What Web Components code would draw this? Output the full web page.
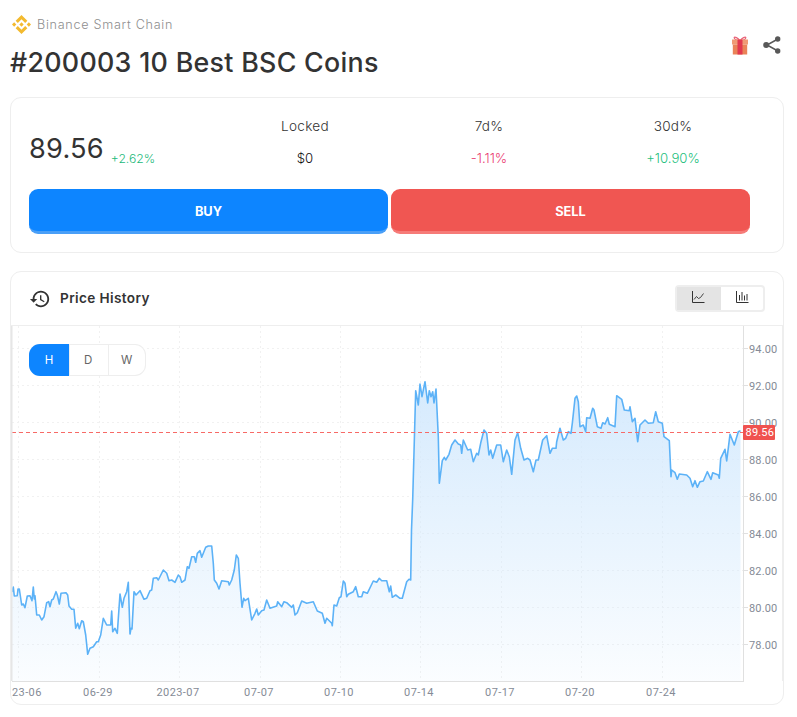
<!DOCTYPE html>
<html lang="en">
<head>
<meta charset="utf-8">
<title>10 Best BSC Coins</title>
<style>
    html, body { margin: 0; background: #fff; }
    body { font-family: Inter, "Liberation Sans", sans-serif; color: #333; }
</style>
</head>
<body>
<coin-page>
    <coin-head chain="Binance Smart Chain" title="#200003 10 Best BSC Coins"></coin-head>
    <stats-card></stats-card>
    <price-history></price-history>
</coin-page>

<script>
class CoinPage extends HTMLElement {
    constructor() {
        super();
        this.attachShadow({ mode: 'open' });
        this.shadowRoot.innerHTML = `
            <style>
                :host {
                    display: flex;
                    flex-direction: column;
                    width: 774px;
                    padding: 15px 13px 12px 10px;
                    gap: 18px;
                }
            </style>
            <slot></slot>
        `;
    }
}

class CoinHead extends HTMLElement {
    constructor() {
        super();
        this.attachShadow({ mode: 'open' });
        this.shadowRoot.innerHTML = `
            <style>
                :host {
                    display: flex;
                    justify-content: space-between;
                    height: 67px;
                    margin-bottom: -3px;
                }
                .chain {
                    display: flex;
                    align-items: center;
                    gap: 6px;
                    height: 19px;
                    padding-left: 2px;
                    font-size: 12.6px;
                    font-weight: 300;
                    letter-spacing: .72px;
                    color: #8e8e8e;
                }
                h1 {
                    margin: 9px 0 0 0;
                    font-size: 26.8px;
                    line-height: 38px;
                    font-weight: 500;
                    letter-spacing: .3px;
                    color: #333;
                }
                .actions {
                    display: flex;
                    gap: 14px;
                    padding: 21px 3px 0 0;
                }
            </style>
            <div>
                <div class="chain">
                    <svg width="19" height="19" viewBox="0 0 126.61 126.61" fill="#f3ba2f">
                        <path d="M38.73 53.2l24.59-24.58 24.6 24.6 14.3-14.31L63.32 0l-38.9 38.9z"/>
                        <path d="M0 63.31l14.3-14.31 14.31 14.31-14.31 14.3z"/>
                        <path d="M38.73 73.41l24.59 24.59 24.6-24.6 14.31 14.29-38.9 38.91-38.91-38.88z"/>
                        <path d="M98 63.31l14.3-14.31 14.31 14.3-14.31 14.32z"/>
                        <path d="M77.83 63.3L63.32 48.78 52.59 59.51l-1.24 1.23-2.54 2.54 14.51 14.5 14.51-14.47z"/>
                    </svg>
                    <span>${this.getAttribute('chain')}</span>
                </div>
                <h1>${this.getAttribute('title')}</h1>
            </div>
            <div class="actions">
                <svg width="18" height="19" viewBox="0 0 18 19">
                    <path d="M9 5C7 1.500 3.500 .5 3.200 1.500 2.900 3 6 5 9 5zM9 5c2-3.500 5.500-4.500 5.800-3.500C15.100 3 12 5 9 5z" fill="none" stroke="#e9657a" stroke-width="1.300"/>
                    <rect x="1" y="3.500" width="16" height="5" fill="#f09a74"/>
                    <rect x="1.800" y="8.500" width="14.400" height="10" fill="#ea8358"/>
                    <rect x="6.500" y="3.500" width="5" height="15" fill="#e2394f"/>
                </svg>
                <svg width="18" height="18" viewBox="0 0 18 18" fill="#585858">
                    <path d="M14 3.500 4 9l10 5.500" fill="none" stroke="#585858" stroke-width="1.500"/>
                    <circle cx="14.700" cy="3" r="2.700"/>
                    <circle cx="3.200" cy="9" r="3"/>
                    <circle cx="14.700" cy="15" r="2.700"/>
                </svg>
            </div>
        `;
    }
}

class StatCell extends HTMLElement {
    constructor() {
        super();
        this.attachShadow({ mode: 'open' });
        this.shadowRoot.innerHTML = `
            <style>
                :host {
                    display: flex;
                    flex-direction: column;
                    align-items: center;
                    gap: 14px;
                    font-size: 13.200px;
                    line-height: 18px;
                    font-weight: 300;
                    color: #333;
                }
                .label { font-size: 13.600px; letter-spacing: .25px; }
                .value { color: var(--tone, #111); }
            </style>
            <span class="label">${this.getAttribute('label')}</span>
            <span class="value"><slot></slot></span>
        `;
    }
}

class TradeButton extends HTMLElement {
    constructor() {
        super();
        this.attachShadow({ mode: 'open' });
        this.shadowRoot.innerHTML = `
            <style>
                :host {
                    display: block;
                    width: 359px;
                    box-sizing: border-box;
                    height: 45px;
                    line-height: 45px;
                    text-align: center;
                    border-radius: 9px;
                    font-size: 12.800px;
                    font-weight: 700;
                    color: #fff;
                    background: var(--fill);
                    border-bottom: 3px solid var(--edge);
                }
            </style>
            <slot></slot>
        `;
    }
}

class StatsCard extends HTMLElement {
    constructor() {
        super();
        this.attachShadow({ mode: 'open' });
        this.shadowRoot.innerHTML = `
            <style>
                :host {
                    display: block;
                    box-sizing: border-box;
                    height: 156px;
                    padding: 19px 18px 0;
                    border: 1px solid #eee;
                    border-radius: 11px;
                    background: #fff;
                }
                .stats {
                    display: grid;
                    grid-template-columns: repeat(4, 184px);
                    height: 71px;
                    margin-bottom: 1px;
                }
                .price {
                    display: flex;
                    align-items: flex-end;
                    gap: 7px;
                    padding-top: 12px;
                    height: 40px;
                }
                .price b {
                    line-height: 40px;
                    font-size: 27.200px;
                    font-weight: 400;
                    letter-spacing: .2px;
                    color: #333;
                }
                .price span {
                    line-height: 18px;
                    margin-bottom: 1px;
                    font-size: 12.200px;
                    font-weight: 300;
                    color: #22b979;
                }
                .trade {
                    display: flex;
                    gap: 3px;
                }
                .buy { --fill: #0d85ff; --edge: #4a9ff7; }
                .sell { --fill: #f05652; --edge: #f67b78; }
                .down { --tone: #ea3d73; }
                .up { --tone: #1fbf7f; }
            </style>
            <div class="stats">
                <div class="price"><b>89.56</b><span>+2.62%</span></div>
                <stat-cell label="Locked">$0</stat-cell>
                <stat-cell label="7d%" class="down">-1.11%</stat-cell>
                <stat-cell label="30d%" class="up">+10.90%</stat-cell>
            </div>
            <div class="trade">
                <trade-button class="buy">BUY</trade-button>
                <trade-button class="sell">SELL</trade-button>
            </div>
        `;
    }
}

// line traced by page pixel, x then y
const PRICE_LINE = [
    12,592, 13.3,587, 14.3,596, 17.3,595.7, 18,589, 19.3,589, 21.7,605, 23.3,604, 25,607.7, 27.3,596, 30,595.7, 32,600.7, 33.3,587, 34.3,599, 35,595.7,
    36.7,615, 39.3,615, 41.7,620, 44,616.7, 46.7,602.7, 48.7,601.7, 50,606.7, 51.7,600, 53.3,599, 56,591.7, 57.3,595, 59.3,604, 61,593.3, 66,592.7, 67.7,595,
    69,606, 71.7,609.3, 74,609.3, 75.7,628.3, 77.7,623.3, 79.3,628.7, 81.7,620.7, 83.3,621.7, 85.7,635, 87.7,654.3, 90,648.3, 93.3,646.7, 96.7,641.7, 98.3,641.7,
    100.7,635, 103.3,618.3, 106.7,625, 110.7,625, 111.7,611, 112.7,631.7, 115,628.3, 117.3,633.3, 120,594, 122.3,607.3, 124,598.3, 126.7,591.7, 128.3,582.3,
    130,634, 131,628.3, 132,629, 134,591.7, 136,595, 140,590.7, 144,599.3, 146.7,598.3, 150,590.7, 151.7,590, 153.3,578.3, 156.7,577.7, 158.3,580, 163.3,570,
    166.7,573.3, 169,580.7, 171.7,580, 175,582.3, 178.3,575, 180,576.7, 181.7,582.3, 185,580, 187.3,566.7, 189,568.3, 191.7,556.7, 194.3,556.7, 195.7,562.3,
    197.3,553.3, 200,550.7, 201.7,557.3, 205.7,547.3, 208.3,546, 211.7,546, 213.3,563.3, 214.3,580, 216.7,583.3, 219,589, 221.7,580.7, 228.3,581.7, 229.3,585,
    231.7,580, 234.3,570, 236.3,555, 238.3,558.3, 240,583.3, 242,607.3, 243.7,598.3, 245,600.7, 248.3,598.3, 251.7,620, 255,613.3, 256.7,609, 258.3,615,
    261.7,610.7, 264,610, 266.7,600, 270,608.3, 276.7,606, 277.7,601.7, 281.7,606.7, 284,601.7, 286.7,602.7, 291.7,607.3, 293.3,605, 295,615, 297.3,612.7,
    301.7,601, 306.7,603.3, 313.3,601.7, 317.3,611, 322.3,613.3, 325,623.3, 326.7,618.3, 331.7,623.3, 332.3,625.7, 334,605, 336.7,606, 339.3,597.7, 341,596.7,
    343.3,581, 345,583.3, 346.7,596.7, 348.3,594.3, 353.3,591.7, 355.7,586.7, 358.3,596.7, 361.7,596.7, 363.3,591.7, 367.3,593.3, 373.3,581, 376.7,582.3,
    379.3,578.3, 381.7,580.7, 386.7,580.7, 389.3,591.7, 390.7,586, 392.3,597.3, 395.7,595, 400,598.3, 402.3,598.3, 406.7,581.7, 409,579.3, 410.7,580,
    411.5,530, 412.7,499.3, 415.7,390.7, 418.3,405, 420,384, 422,396.7, 425,381.7, 427.7,403, 429.3,390.7, 431,396.7, 432.7,391.7, 434,403, 436,389, 438.3,436.7,
    439.3,483.3, 442.3,460.7, 444.3,457.3, 445.7,460, 449,454.3, 451.7,445, 455,440, 458.3,444, 460.7,445, 461.7,453.3, 463.3,440, 467.7,450, 470.7,449.3,
    473.3,461.7, 476.7,453.3, 478.3,455, 481,441.7, 484,430, 486.7,433.3, 489,455, 490.7,450, 492.7,458.3, 496.7,445, 500.7,445, 503.3,461.7, 506.7,450,
    509.3,456.7, 511.7,474.3, 515,440, 517.7,432.7, 520.7,448.3, 524,460, 527.7,458.3, 530,460, 533.3,471.7, 536,460, 538.3,460, 542.7,440, 546.7,435.7,
    550,453.3, 552.3,448.3, 556,448.3, 556.7,441.7, 560,428.3, 563.3,440, 565.7,438.3, 568.3,431.7, 571,433.3, 572.3,423.3, 575,398.3, 576.7,396, 578.3,401.7,
    580,426.7, 583.3,425, 585.7,431.7, 586.7,417.7, 590,418.3, 592.7,408.3, 594,410, 597.3,426.7, 601,428.3, 602.7,422.7, 605,424, 607.7,417.7, 609.3,424.3,
    615,426.7, 616.7,395.7, 621.7,399.3, 624.3,410, 629.3,410.7, 630,406.7, 632.3,421.7, 635,418.3, 637.7,441.7, 640,425, 645,420, 648.3,423.3, 653.3,422.7,
    655.7,411.7, 658.3,421.7, 662.3,423.3, 664,436.7, 669.3,440.7, 671,476.7, 671.7,470, 675,472.7, 677.3,479.3, 679.3,474, 686.7,475, 690,478.3, 692.7,486.7,
    695,480.7, 697.3,487.3, 700,481.7, 703.3,481, 707.3,471.7, 711,479.3, 712.7,472.7, 718.3,475, 719.3,478.3, 720.7,458.3, 725,449.3, 726.7,461, 730,434.3,
    734.3,445, 738.3,431.7, 740.5,430.7
];

class PriceChart extends HTMLElement {
    constructor() {
        super();
        this.attachShadow({ mode: 'open' });

        const pts = [];
        for (let i = 0; i < PRICE_LINE.length; i += 2) {
            pts.push(PRICE_LINE[i] + ',' + PRICE_LINE[i + 1]);
        }
        const line = pts.join(' ');
        const area = line + ' 740.5,681 12,681';

        const ticks = [94, 92, 90, 88, 86, 84, 82, 80, 78];
        const dates = ['23-06', '06-29', '2023-07', '07-07', '07-10', '07-14', '07-17', '07-20', '07-24'];

        let grid = '';
        let labels = '';
        ticks.forEach((t, i) => {
            const y = 349 + i * 37;
            grid += `<line x1="12" x2="743" y1="${y - .5}" y2="${y - .5}"/>`;
            labels += `<line x1="743" x2="748" y1="${y - .5}" y2="${y - .5}" stroke="#e0e0e0"/>`;
            labels += `<text class="price" x="749" y="${y + 4}">${t}.00</text>`;
        });
        dates.forEach((d, i) => {
            const x = Math.round(18.3 + i * 80.4) + .5;
            grid += `<line x1="${x}" x2="${x}" y1="326" y2="681"/>`;
            // the first date sits against the left edge of the plot
            labels += i === 0
                ? `<text x="12" y="695.500">${d}</text>`
                : `<text x="${x - 1.5}" y="695.500" text-anchor="middle">${d}</text>`;
        });

        this.shadowRoot.innerHTML = `
            <style>
                :host {
                    display: block;
                    position: relative;
                    height: 378px;
                }
                svg { display: block; }
                .grid line {
                    stroke: #f1f1f1;
                    stroke-dasharray: 2 3;
                }
                .labels text {
                    font-family: Roboto, "Liberation Sans", sans-serif;
                    font-size: 11px;
                    letter-spacing: .4px;
                    fill: #858b96;
                }
                .labels text.price { letter-spacing: .15px; }
                .tag {
                    font-family: Roboto, "Liberation Sans", sans-serif;
                    font-size: 11px;
                    letter-spacing: .2px;
                    fill: #fff;
                }
                .ranges {
                    position: absolute;
                    left: 18px;
                    top: 18px;
                }
            </style>
            <svg width="772" height="378" viewBox="11 326 772 378">
                <defs>
                    <linearGradient id="fade" gradientUnits="userSpaceOnUse" x1="0" x2="0" y1="381" y2="681">
                        <stop offset="0" stop-color="#d3e9fd" stop-opacity=".95"/>
                        <stop offset="1" stop-color="#d3e9fd" stop-opacity=".1"/>
                    </linearGradient>
                </defs>
                <g class="grid">${grid}</g>
                <polygon points="${area}" fill="url(#fade)"/>
                <polyline points="${line}" fill="none" stroke="#5cb2f7" stroke-width="1.600" stroke-linejoin="round"/>
                <line x1="12" x2="743" y1="432.500" y2="432.500" stroke="#f76a66" stroke-dasharray="4 3"/>
                <line x1="11.500" x2="11.500" y1="326" y2="681" stroke="#e6e6e6" stroke-width="2"/>
                <line x1="743.500" x2="743.500" y1="326" y2="681" stroke="#e0e0e0"/>
                <line x1="12" x2="744" y1="681.500" y2="681.500" stroke="#e0e0e0"/>
                <line x1="782.500" x2="782.500" y1="326" y2="681" stroke="#eee"/>
                <g class="labels">${labels}</g>
                <rect x="743" y="425" width="32" height="15" rx="1" fill="#f0524f"/>
                <text class="tag" x="745.500" y="436">89.56</text>
            </svg>
            <range-switch class="ranges"></range-switch>
        `;
    }
}

class RangeSwitch extends HTMLElement {
    constructor() {
        super();
        this.attachShadow({ mode: 'open' });
        this.shadowRoot.innerHTML = `
            <style>
                :host {
                    display: flex;
                    height: 32px;
                    width: 117px;
                    border-radius: 11px;
                    overflow: hidden;
                    background: #fff;
                    box-shadow: inset 0 0 0 1px #eee;
                    font-size: 11.500px;
                    color: #666;
                }
                span {
                    flex: 1;
                    line-height: 32px;
                    text-align: center;
                    border-left: 1px solid #eee;
                    padding-right: 1px;
                }
                span.on {
                    flex: 0 0 40px;
                    border-left: 0;
                    padding-right: 0;
                    background: #0d85ff;
                    color: #fff;
                }
            </style>
            <span class="on">H</span><span>D</span><span>W</span>
        `;
    }
}

class PriceHistory extends HTMLElement {
    constructor() {
        super();
        this.attachShadow({ mode: 'open' });
        this.shadowRoot.innerHTML = `
            <style>
                :host {
                    display: block;
                    height: 434px;
                    box-sizing: border-box;
                    border: 1px solid #eee;
                    border-radius: 11px;
                    overflow: hidden;
                    background: #fff;
                }
                header {
                    display: flex;
                    align-items: center;
                    height: 53px;
                    padding: 0 18px;
                    border-bottom: 1px solid #eee;
                }
                h2 {
                    margin: 0 0 2px 9px;
                    flex: 1;
                    font-size: 13.600px;
                    font-weight: 600;
                    letter-spacing: .38px;
                    color: #333;
                }
                .toggle {
                    display: flex;
                    width: 90px;
                    height: 27px;
                    box-sizing: border-box;
                    border: 2px solid #eee;
                    border-radius: 4px;
                }
                .toggle div {
                    flex: 1;
                    display: flex;
                    align-items: center;
                    justify-content: center;
                    padding-bottom: 3px;
                }
                .toggle .on { background: #e4e4e4; padding-right: 2px; }
            </style>
            <header>
                <svg width="22" height="22" viewBox="0 0 24 24" fill="#333">
                    <path d="M13 3c-4.970 0-9 4.030-9 9H1l3.890 3.890.07.140L9 12H6c0-3.870 3.130-7 7-7s7 3.130 7 7-3.130 7-7 7c-1.930 0-3.680-.790-4.940-2.060l-1.420 1.420C8.270 19.990 10.510 21 13 21c4.970 0 9-4.030 9-9s-4.030-9-9-9zm-1 5v5l4.280 2.540.720-1.210-3.500-2.080V8H12z"/>
                </svg>
                <h2>Price History</h2>
                <div class="toggle">
                    <div class="on">
                        <svg width="14" height="14" viewBox="0 0 14 14" fill="none" stroke="#333">
                            <path d="M1.500 1v11.500H13.500"/>
                            <path d="M3 9.500l2.500-3 2 2 2-1 3-4" stroke-width=".9"/>
                        </svg>
                    </div>
                    <div>
                        <svg width="14" height="14" viewBox="0 0 14 14" fill="none" stroke="#333">
                            <path d="M1.500 1v11.500H13.500"/>
                            <path d="M4.500 10.500V5M7 10.500V2M9.500 10.500V5.500M12 10.500V4"/>
                        </svg>
                    </div>
                </div>
            </header>
            <price-chart></price-chart>
        `;
    }
}

customElements.define('coin-page', CoinPage);
customElements.define('coin-head', CoinHead);
customElements.define('stat-cell', StatCell);
customElements.define('trade-button', TradeButton);
customElements.define('stats-card', StatsCard);
customElements.define('range-switch', RangeSwitch);
customElements.define('price-chart', PriceChart);
customElements.define('price-history', PriceHistory);
</script>
</body>
</html>
